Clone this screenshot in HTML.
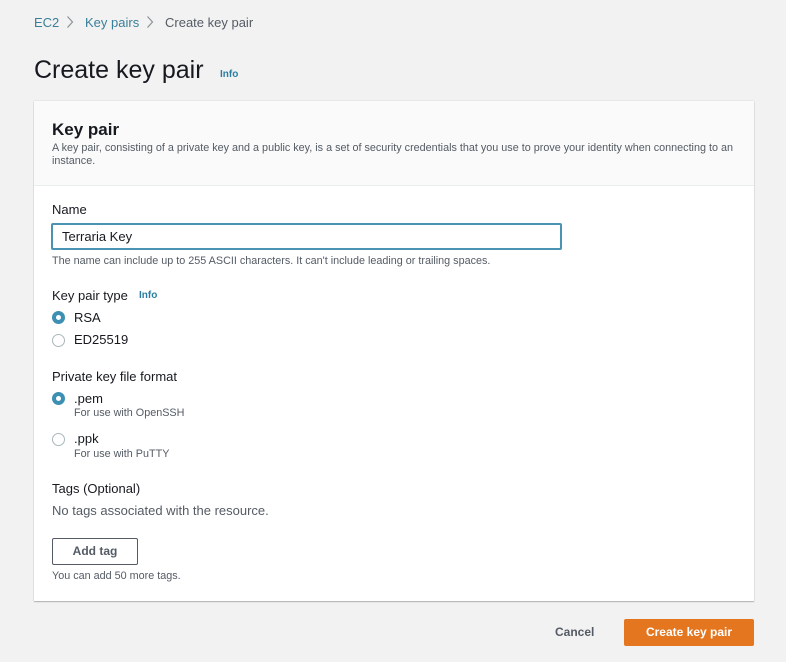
<!DOCTYPE html>
<html><head><style>
*{box-sizing:border-box;margin:0;padding:0}
body{width:786px;height:662px;background:#f2f2f2;font-family:"Liberation Sans",sans-serif;color:#16191f;position:relative;overflow:hidden}
.a{position:absolute;white-space:nowrap}
.card{position:absolute;left:34px;top:101px;width:720px;height:500px;background:#fff;box-shadow:0 1px 1px rgba(0,0,0,.25),0 0 1px rgba(0,0,0,.2)}
.hdr{position:absolute;left:0;top:0;width:720px;height:85px;background:#fafafa;border-bottom:1px solid #eaeded}
.r{position:absolute;width:13px;height:13px;border-radius:50%;border:1px solid #aab7b8;background:#fff}
.r.on{border:4px solid #3d8fb3}
.s{font-size:13px}.xs{font-size:10.8px;color:#545b64}
</style></head><body>
<div class="a s" style="left:34px;top:15px;color:#3a7f99">EC2</div>
<svg class="a" style="left:66px;top:15px" width="8" height="14"><path d="M1.5 1.5L6.5 7L1.5 12.5" fill="none" stroke="#879596" stroke-width="1.2"/></svg>
<div class="a s" style="left:85px;top:15px;color:#3a7f99">Key pairs</div>
<svg class="a" style="left:146px;top:15px" width="8" height="14"><path d="M1.5 1.5L6.5 7L1.5 12.5" fill="none" stroke="#879596" stroke-width="1.2"/></svg>
<div class="a s" style="left:165px;top:15px;color:#545b64">Create key pair</div>
<div class="a" style="left:34px;top:56px;font-size:25px">Create key pair</div>
<div class="a" style="left:220px;top:69px;font-size:10px;font-weight:bold;color:#2b7ea1">Info</div>
<div class="card">
<div class="hdr"></div>
<div class="a" style="left:18px;top:19px;font-size:17px;font-weight:bold">Key pair</div>
<div class="a" style="left:18px;top:41px;font-size:10.8px;color:#545b64;line-height:13px;white-space:normal;width:688px">A key pair, consisting of a private key and a public key, is a set of security credentials that you use to prove your identity when connecting to an instance.</div>
<div class="a s" style="left:18px;top:101px">Name</div>
<div class="a" style="left:17px;top:122px;width:511px;height:27px;border:2px solid #4a93b3;border-radius:2px"></div>
<div class="a s" style="left:28px;top:128px">Terraria Key</div>
<div class="a xs" style="left:18px;top:154px">The name can include up to 255 ASCII characters. It can't include leading or trailing spaces.</div>
<div class="a s" style="left:18px;top:187px">Key pair type</div>
<div class="a" style="left:105px;top:189px;font-size:10px;font-weight:bold;color:#2b7ea1">Info</div>
<div class="r on" style="left:18px;top:210px"></div><div class="a s" style="left:40px;top:209px">RSA</div>
<div class="r" style="left:18px;top:233px"></div><div class="a s" style="left:40px;top:231px">ED25519</div>
<div class="a s" style="left:18px;top:268px">Private key file format</div>
<div class="r on" style="left:18px;top:291px"></div><div class="a s" style="left:40px;top:290px">.pem</div>
<div class="a xs" style="left:40px;top:306px">For use with OpenSSH</div>
<div class="r" style="left:18px;top:332px"></div><div class="a s" style="left:40px;top:330px">.ppk</div>
<div class="a xs" style="left:40px;top:347px">For use with PuTTY</div>
<div class="a s" style="left:18px;top:380px">Tags (Optional)</div>
<div class="a s" style="left:18px;top:402px;color:#545b64">No tags associated with the resource.</div>
<div class="a" style="left:18px;top:437px;width:86px;height:27px;border:1px solid #545b64;border-radius:2px;font-size:12px;font-weight:bold;color:#545b64;text-align:center;line-height:25px">Add tag</div>
<div class="a xs" style="left:18px;top:469px">You can add 50 more tags.</div>
</div>
<div class="a" style="left:555px;top:625px;font-size:12px;font-weight:bold;color:#545b64">Cancel</div>
<div class="a" style="left:624px;top:619px;width:130px;height:27px;background:#e4761f;border-radius:2px;color:#fff;font-size:12px;font-weight:bold;text-align:center;line-height:27px">Create key pair</div>
</body></html>
